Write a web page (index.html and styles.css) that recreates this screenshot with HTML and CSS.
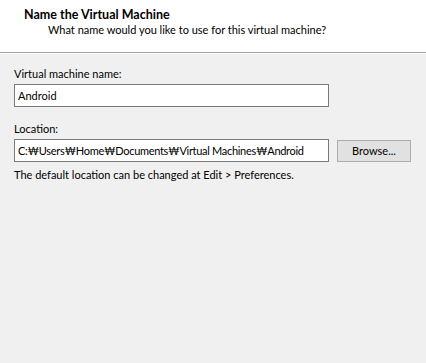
FILE: index.html
```html
<!DOCTYPE html>
<html lang="en">
<head>
  <meta charset="UTF-8" />
  <title>Name the Virtual Machine</title>
  <link rel="stylesheet" href="styles.css">
</head>
<body>

  <header class="wizard-header">
    <h1 class="wizard-title">Name the Virtual Machine</h1>
    <p class="wizard-subtitle">What name would you like to use for this virtual machine?</p>
  </header>

  <main class="wizard-body">
    <label class="field-label" for="vmName">Virtual machine name:</label>
    <div class="field-row">
      <input class="text-box" id="vmName" type="text" value="Android">
    </div>

    <label class="field-label location-label" for="vmLocation">Location:</label>
    <div class="field-row">
      <input class="text-box path-box" id="vmLocation" type="text" value="C:₩Users₩Home₩Documents₩Virtual Machines₩Android">
      <button class="browse-button">Browse...</button>
    </div>
    <p class="hint">The default location can be changed at Edit &gt; Preferences.</p>
  </main>

</body>
</html>
```

FILE: styles.css
```css
* {
  margin: 0;
  padding: 0;
  box-sizing: border-box;
}

html, body {
  height: 100%;
}

body {
  font-family: Lato, "Liberation Sans", sans-serif;
  font-size: 11px;
  color: #000;
  background: #f0f0f0;
}

.wizard-header {
  height: 53px;
  background: #fff;
  border-bottom: 1px solid #a0a0a0;
  box-shadow: 0 1px 0 #fff;
  padding: 7px 0 0 24px;
}

.wizard-title {
  font-size: 12.5px;
  font-weight: 700;
  line-height: 15px;
}

.wizard-subtitle {
  padding-left: 24px;
  line-height: 15px;
}

.wizard-body {
  padding: 13px 14px 0 14px;
}

.field-label {
  display: block;
  line-height: 15px;
  margin-bottom: 3px;
}

.location-label {
  margin-top: 14px;
}

.field-row {
  display: flex;
  align-items: center;
  gap: 8px;
}

.text-box {
  width: 315px;
  height: 23px;
  border: 1px solid #7a7a7a;
  background: #fff;
  padding: 0 3px;
  font-family: inherit;
  font-size: 11px;
  color: #000;
  outline: none;
}

.path-box {
  letter-spacing: -0.3px;
}

.browse-button {
  width: 74px;
  height: 22px;
  border: 1px solid #adadad;
  background: #e1e1e1;
  font-family: inherit;
  font-size: 11px;
  color: #000;
}

.hint {
  margin-top: 5px;
  line-height: 15px;
}
```
